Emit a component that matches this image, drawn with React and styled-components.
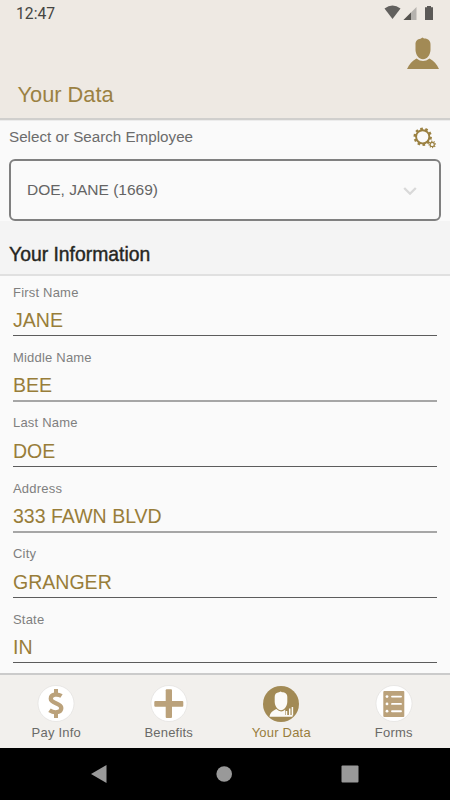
import React from 'react';
import styled, {createGlobalStyle} from 'styled-components';

const GlobalStyle = createGlobalStyle`
    * {
        box-sizing: border-box;
    }

    body {
        margin: 0;
        background: #fafafa;
        font-family: "Liberation Sans", Arial, sans-serif;
    }
`

const Screen = styled.div`
    display: flex;
    flex-direction: column;
    width: 450px;
    height: 800px;
    overflow: hidden;
    background: #fafafa;
`

const Header = styled.header`
    display: flex;
    flex-direction: column;
    height: 120px;
    background: #eee9e3;
    border-bottom: 2px solid #d0cfcd;
    box-shadow: 0 1px 0 #ececec;
`

const StatusBar = styled.div`
    display: flex;
    justify-content: space-between;
    height: 28px;
    padding: 5px 15px 0 16px;
    color: #454441;
    font: 15.7px/18px Roboto, sans-serif;
`

const ProfileRow = styled.div`
    display: flex;
    justify-content: flex-end;
    height: 53px;
    padding: 9px 11px 0 0;
`

const Title = styled.h1`
    margin: 0;
    padding-left: 17.5px;
    color: #9b8142;
    font-size: 21.8px;
    font-weight: 400;
    line-height: 28px;
`

const Picker = styled.section`
    height: 101px;
    padding: 6px 9px 0;
`

const PickerTop = styled.div`
    display: flex;
    justify-content: space-between;
    height: 33px;
    padding-right: 4px;
`

const PickerLabel = styled.label`
    color: #6c6c6c;
    font-size: 15.2px;
    line-height: 21px;
`

const Select = styled.div`
    display: flex;
    align-items: center;
    justify-content: space-between;
    height: 62px;
    padding: 0 22px 0 16px;
    border: 2px solid #808080;
    border-radius: 6px;
    color: #646464;
    font-size: 15.5px;
`

const SectionTitle = styled.h2`
    height: 55px;
    margin: 0;
    padding: 20px 9px 0;
    background: #f4f4f4;
    border-bottom: 2px solid #e0e0e0;
    color: #26261f;
    font-size: 19.35px;
    font-weight: 400;
    line-height: 26px;
    -webkit-text-stroke: 0.4px #26261f;
`

const Fields = styled.div`
    display: flex;
    flex-direction: column;
    height: 397px;
    padding: 0 13px;
`

const Field = styled.div`
    flex: none;
    height: 65.4px;
    padding-top: 8.6px;
`

const FieldLabel = styled.div`
    color: #7f7f7f;
    font-size: 13px;
    letter-spacing: 0.2px;
    line-height: 16px;
`

const FieldValue = styled.div`
    height: 34.8px;
    padding-top: 7.4px;
    color: #987d39;
    font-size: 19.55px;
    line-height: 24px;
`

const Rule = styled.div`
    height: ${props => props.$soft ? '2px' : '1px'};
    margin-top: ${props => props.$soft ? '-0.7px' : '0'};
    background: ${props => props.$soft ? '#a6a6a6' : '#5c5c5c'};
`

const TabBar = styled.nav`
    display: grid;
    grid-template-columns: repeat(4, 1fr);
    height: 75px;
    background: #f2f0ed;
    border-top: 2px solid #cbcbcb;
`

const Tab = styled.div`
    display: flex;
    flex-direction: column;
    align-items: center;
    padding-top: 10px;
    color: ${props => props.$active ? '#987d3c' : '#6a6a68'};
    font-size: 13px;
    letter-spacing: 0.2px;
    line-height: 20px;
    white-space: nowrap;
`

const TabIcon = styled.svg`
    width: 38px;
    height: 38px;
`

const SystemNav = styled.div`
    display: grid;
    grid-template-columns: repeat(3, 125px);
    height: 52px;
    padding-left: 37px;
    align-items: center;
    justify-items: center;
    background: #000;
`

const fields = [
    {label: 'First Name', value: 'JANE'},
    {label: 'Middle Name', value: 'BEE', soft: true},
    {label: 'Last Name', value: 'DOE'},
    {label: 'Address', value: '333 FAWN BLVD', soft: true},
    {label: 'City', value: 'GRANGER'},
    {label: 'State', value: 'IN'},
];

const StatusIcons = () => (
    <svg width="52" height="18" viewBox="0 0 52 18">
        <path d="M1.5 3.5Q9.5-2.5 17.5 3.5L9.5 14Z" fill="#62605e" />
        <path d="M33.5 2V15H20.5Z" fill="#b5b2ae" />
        <path d="M28 7.5V15H20.5Z" fill="#55534f" />
        <path d="M42 2.300h2V1h4v1.300h2V15h-8Z" fill="#5b5957" />
    </svg>
)

const ProfileIcon = () => (
    <svg width="32" height="32" viewBox="0 0 32 32" fill="#a28a55">
        <path d="M8.500 8C8.300 4 10.500 2 13.500 1.800L15.500 0.500L17 1.500C21 1.300 23.800 3.800 23.500 8V13C23.300 18 20 22.300 16 22.300S8.700 18 8.500 13Z" />
        <path d="M0 32C2.500 27 5 24 9.500 21.500Q16 26.500 22.500 21.500C27 24 29.500 27 32 32Z" />
    </svg>
)

const GearTeeth = ({count, cx, cy, inner, outer, width}) => (
    Array.from({length: count}, (_, i) => (
        <rect
            key={i}
            x={cx - width / 2}
            y={cy - outer}
            width={width}
            height={outer - inner}
            transform={`rotate(${i * 360 / count - 8} ${cx} ${cy})`}
        />
    ))
)

const SettingsIcon = () => (
    <svg width="24" height="24" viewBox="0 0 24 24" fill="#9b8142">
        <circle cx="9.700" cy="10.800" r="6.600" fill="none" stroke="#9b8142" strokeWidth="1.900" />
        <GearTeeth count={10} cx={9.7} cy={10.8} inner={6.5} outer={9.2} width={2.7} />
        <circle cx="19.200" cy="18.400" r="2.100" fill="none" stroke="#9b8142" strokeWidth="1.200" />
        <GearTeeth count={8} cx={19.2} cy={18.4} inner={2.3} outer={3.8} width={1.1} />
    </svg>
)

const ChevronIcon = () => (
    <svg width="14" height="10" viewBox="0 0 14 10">
        <path d="M1.200 3L7 8.700L12.800 3" fill="none" stroke="#d9d9d9" strokeWidth="2.300" />
    </svg>
)

const Disc = () => <circle cx="19" cy="18.500" r="18" fill="#fff" stroke="#d8d7d4" strokeWidth="0.500" />

const PayIcon = () => (
    <TabIcon viewBox="0 0 38 38">
        <Disc />
        <path
            d="M24.500 11C20.500 8.500 13.800 9.200 13.800 13.700C13.800 18.800 24.300 17.500 24.300 23C24.300 28 17 28.400 12.500 25.300"
            fill="none"
            stroke="#bba27b"
            strokeWidth="4.300"
        />
        <path d="M17 4h4v6.500h-4zM17 26h4v7h-4z" fill="#bba27b" />
    </TabIcon>
)

const BenefitsIcon = () => (
    <TabIcon viewBox="0 0 38 38">
        <Disc />
        <rect x="15.700" y="4.300" width="6.300" height="28.700" rx="1" fill="#bba27b" />
        <rect x="4.300" y="15.900" width="29" height="5.900" rx="1" fill="#bba27b" />
    </TabIcon>
)

const DataIcon = () => (
    <TabIcon viewBox="0 0 38 38">
        <circle cx="19" cy="19" r="18" fill="#a28a55" />
        <path
            d="M12.700 12C12.600 9 14.500 7.500 17 7.300L18.700 6.500L20 7.200C23.300 7.200 25.400 9 25.300 12V17C25 21.500 22.300 25.200 19 25.200S13 21.500 12.700 17Z"
            fill="#fbfaf7"
        />
        <path d="M7.500 31.700C8.200 27.500 10.500 26 14.300 24Q19 28.500 23.200 24.500V30H30.500V31.700Z" fill="#fbfaf7" />
        <path
            d="M24.500 26v4.500M27.700 23.500v7M30.400 22v8.500"
            fill="none"
            stroke="#fbfaf7"
            strokeWidth="1.500"
        />
    </TabIcon>
)

const FormsIcon = () => (
    <TabIcon viewBox="0 0 38 38">
        <Disc />
        <rect x="8.300" y="6" width="21" height="26" rx="1" fill="#bba27b" />
        {[11.6, 18.9, 26.2].map(y => (
            <g key={y} fill="#fff" stroke="#fff">
                <circle cx="12" cy={y} r="1.400" stroke="none" />
                <path d={`M17 ${y}h9`} strokeWidth="1.900" strokeLinecap="round" />
            </g>
        ))}
    </TabIcon>
)

const tabs = [
    {name: 'Pay Info', Icon: PayIcon},
    {name: 'Benefits', Icon: BenefitsIcon},
    {name: 'Your Data', Icon: DataIcon, active: true},
    {name: 'Forms', Icon: FormsIcon},
];

export default function App() {
    return (
        <Screen>
            <GlobalStyle />
            <Header>
                <StatusBar>
                    <span>12:47</span>
                    <StatusIcons />
                </StatusBar>
                <ProfileRow>
                    <ProfileIcon />
                </ProfileRow>
                <Title>Your Data</Title>
            </Header>
            <Picker>
                <PickerTop>
                    <PickerLabel>Select or Search Employee</PickerLabel>
                    <SettingsIcon />
                </PickerTop>
                <Select>
                    DOE, JANE (1669)
                    <ChevronIcon />
                </Select>
            </Picker>
            <SectionTitle>Your Information</SectionTitle>
            <Fields>
                {fields.map(field => (
                    <Field key={field.label}>
                        <FieldLabel>{field.label}</FieldLabel>
                        <FieldValue>{field.value}</FieldValue>
                        <Rule $soft={field.soft} />
                    </Field>
                ))}
            </Fields>
            <TabBar>
                {tabs.map(({name, Icon, active}) => (
                    <Tab key={name} $active={active}>
                        <Icon />
                        {name}
                    </Tab>
                ))}
            </TabBar>
            <SystemNav>
                <svg width="19" height="20" viewBox="0 0 19 20">
                    <path d="M1 10L16.500 1V19Z" fill="#999" />
                </svg>
                <svg width="17" height="16" viewBox="0 0 17 16">
                    <circle cx="8.200" cy="8" r="7.800" fill="#999" />
                </svg>
                <svg width="18" height="18" viewBox="0 0 18 18">
                    <rect x="0.500" y="0.500" width="17" height="17" rx="1" fill="#999" />
                </svg>
            </SystemNav>
        </Screen>
    );
}
